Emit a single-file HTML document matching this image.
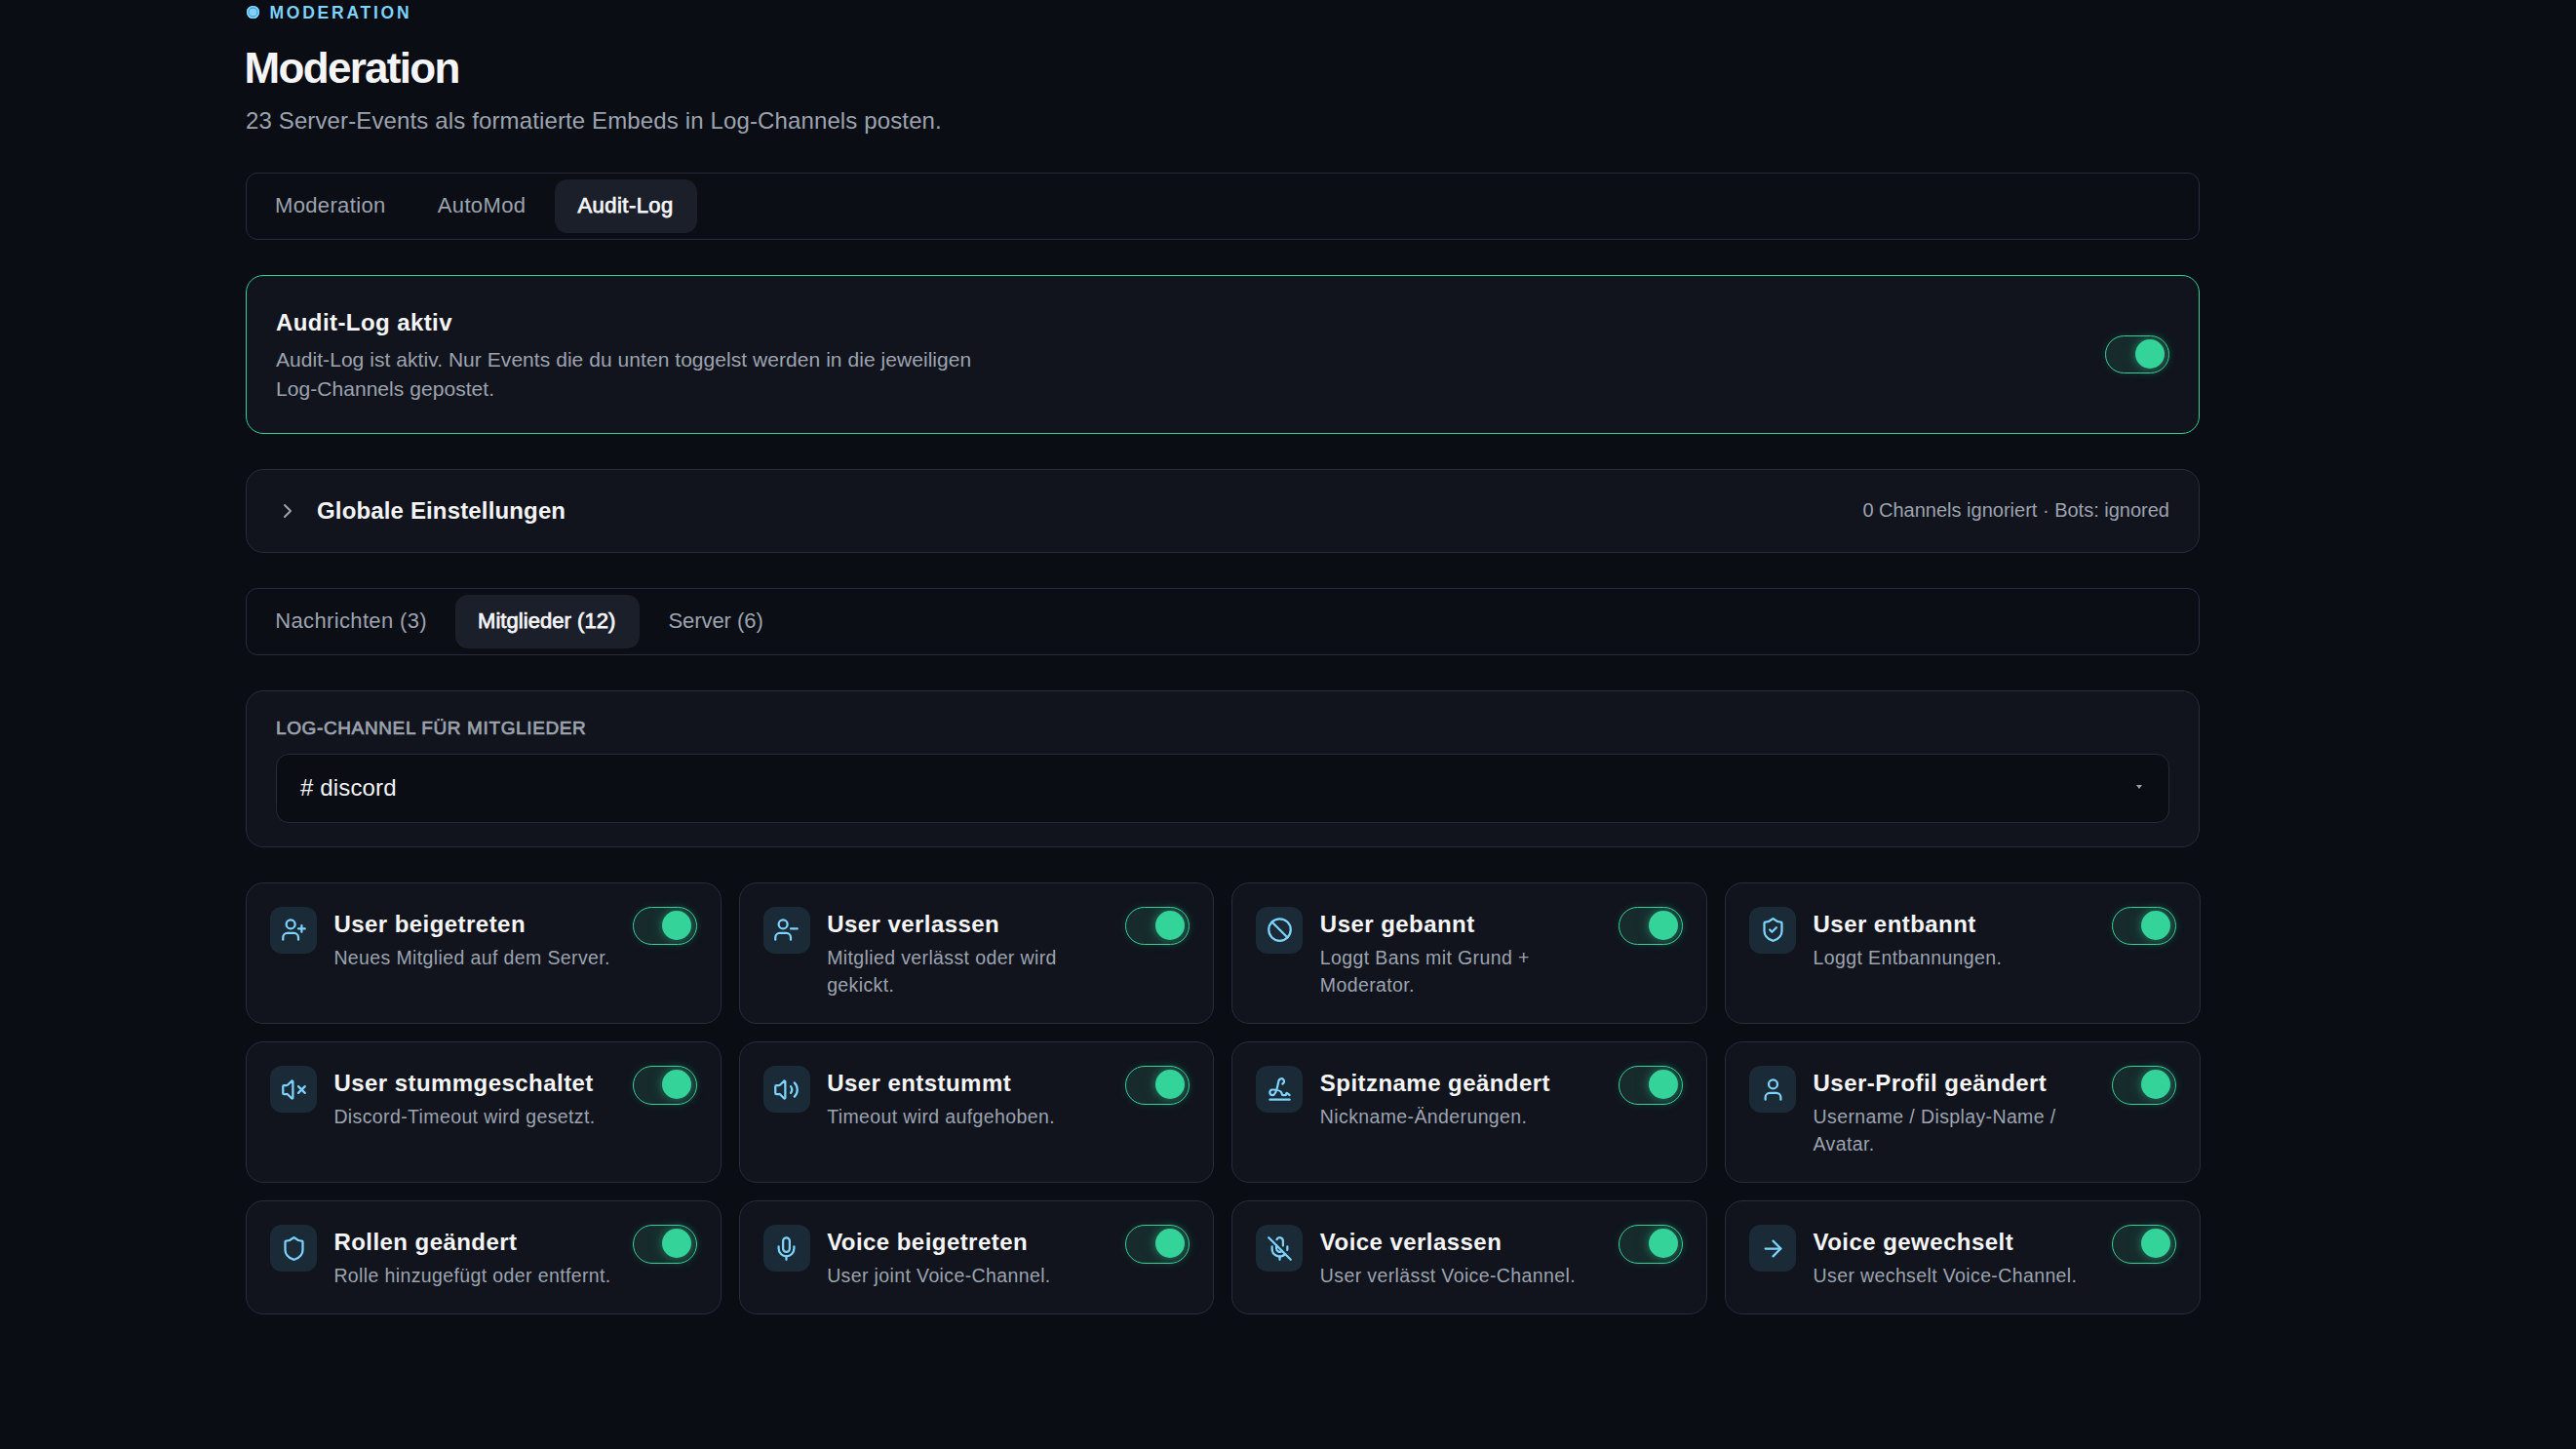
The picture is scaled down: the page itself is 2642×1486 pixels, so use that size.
<!DOCTYPE html>
<html lang="de"><head><meta charset="utf-8"><title>Moderation</title>
<style>
*{box-sizing:border-box;margin:0;padding:0}
html,body{width:2642px;height:1486px;overflow:hidden;background:#0a0d14}
body{position:relative;font-family:"Liberation Sans",sans-serif;}
.t{position:absolute;white-space:nowrap}
.dot{position:absolute;left:253px;top:6.3px;width:13px;height:12.8px;border-radius:50%;background:#7dd3fc;box-shadow:inset 0 0 0 1.6px #7ddcfc, inset 0 0 0 2.4px #3f7fd0}
.eyebrow{font-size:17.5px;line-height:24px;font-weight:700;letter-spacing:2.75px;color:#7dd3fc}
.h1{font-size:44px;line-height:52px;font-weight:700;letter-spacing:-1.7px;color:#f5f5f7}
.sub{font-size:24px;line-height:32px;color:#9ca3af;letter-spacing:0.13px}
.box{position:absolute;left:252px;width:2004px;border:1.5px solid #292d3a}
.gc{border-radius:12.5px}
.tabs{border-radius:12px;background:#0b0e15}
.act{position:absolute;border-radius:13px;background:#1b1f2a}
.tab{font-size:22px;line-height:30px;color:#9ca3af;letter-spacing:0.35px}
.tab.on{color:#f5f5f7;font-weight:400;font-size:22px;letter-spacing:0.05px;-webkit-text-stroke:0.75px #f5f5f7}
.card{border-radius:18px;background:#11141d}
.card.green{border-color:#34d399}
.ct{font-size:24px;line-height:32px;font-weight:700;color:#f5f5f7;letter-spacing:0.45px}
.cd{font-size:21px;line-height:29.7px;color:#9ca3af}
.gd{font-size:19.5px;line-height:28px;color:#9ca3af;letter-spacing:0.38px}
.ic{position:absolute;width:24px;height:24px;color:#7dd3fc}
.ic svg{display:block}
.chev{color:#9ca3af}
.ib{position:absolute;width:48px;height:48px;border-radius:12px;background:#1b2a37}
.ib .ic{left:10.5px;top:10.3px;width:27px;height:27px}
.lbl{font-size:19px;line-height:26px;font-weight:400;color:#9ca3af;letter-spacing:0.62px;-webkit-text-stroke:0.7px #9ca3af}
.sel{position:absolute;border:1.5px solid #262a37;border-radius:13px;background:#0a0d14}
.disc{font-size:24px;line-height:32px;color:#f5f5f7}
.tri{position:absolute;width:0;height:0;border-left:3.5px solid transparent;border-right:3.5px solid transparent;border-top:4.5px solid #9ca3af}
.tg{position:absolute;width:66px;height:39.3px;border-radius:20px;border:1.5px solid #34d399;background:#172a2c;box-shadow:0 0 10px rgba(52,211,153,.12)}
.kn{position:absolute;right:4.5px;top:2.6px;width:30px;height:30px;border-radius:50%;background:#34d399;box-shadow:0 0 8px rgba(52,211,153,.4),0 0 18px rgba(52,211,153,.18)}
</style>
<script>(function(){var w=window.innerWidth;if(w&&Math.abs(w-2642)>2){document.documentElement.style.zoom=(w/2642);}})();</script></head>
<body>
<div class="dot"></div>
<div class="t eyebrow" style="left:276.5px;top:1.24px">MODERATION</div>
<div class="t h1" style="left:250.6px;top:44.05px">Moderation</div>
<div class="t sub" style="left:252px;top:107.68px">23 Server-Events als formatierte Embeds in Log-Channels posten.</div>
<div class="box tabs" style="top:176.7px;height:69.5px"></div>
<div class="act" style="left:569.3px;top:184px;width:145.4px;height:54.6px"></div>
<div class="t tab" style="left:282px;top:195.78px">Moderation</div>
<div class="t tab" style="left:448.8px;top:195.78px">AutoMod</div>
<div class="t tab on" style="left:592.5px;top:195.78px;letter-spacing:0.45px">Audit-Log</div>
<div class="box card green" style="top:282px;height:163.4px"></div>
<div class="t ct" style="left:283px;top:315.08px;letter-spacing:0.42px">Audit-Log aktiv</div>
<div class="t cd" style="left:283px;top:354.37px;line-height:29.7px;font-size:21px;letter-spacing:0.05px">Audit-Log ist aktiv. Nur Events die du unten toggelst werden in die jeweiligen<br>Log-Channels gepostet.</div>
<div class="tg" style="left:2159px;top:344px"><div class="kn"></div></div>
<div class="box card" style="top:481px;height:85.5px"></div>
<div class="ic chev" style="left:282.5px;top:512px"><svg width="24" height="24" viewBox="0 0 24 24" fill="none" stroke="currentColor" stroke-width="2" stroke-linecap="round" stroke-linejoin="round"><path d="m9 18 6-6-6-6"/></svg></div>
<div class="t ct" style="left:325px;top:507.58px;letter-spacing:0.15px">Globale Einstellungen</div>
<div class="t cd" style="right:417px;top:508.97px;font-size:20px;line-height:28px">0 Channels ignoriert · Bots: ignored</div>
<div class="box tabs" style="top:603px;height:69.2px"></div>
<div class="act" style="left:467.2px;top:610px;width:188.6px;height:55px"></div>
<div class="t tab" style="left:282.3px;top:621.98px">Nachrichten (3)</div>
<div class="t tab on" style="left:490px;top:621.98px">Mitglieder (12)</div>
<div class="t tab" style="left:685.4px;top:621.98px;letter-spacing:-0.05px">Server (6)</div>
<div class="box card" style="top:708.3px;height:160.6px"></div>
<div class="t lbl" style="left:283px;top:733.82px">LOG-CHANNEL FÜR MITGLIEDER</div>
<div class="sel" style="left:283.3px;top:773.3px;width:1942px;height:70.5px"></div>
<div class="t disc" style="letter-spacing:0.15px;left:308px;top:791.98px">#&nbsp;discord</div>
<div class="tri" style="left:2191px;top:805px"></div>
<div class="box card gc" style="left:252.00px;top:904.7px;width:487.6px;height:145.5px"></div>
<div class="ib" style="left:277.00px;top:930.00px"><div class="ic"><svg width="27" height="27" viewBox="0 0 24 24" fill="none" stroke="currentColor" stroke-width="2" stroke-linecap="round" stroke-linejoin="round"><path d="M16 21v-2a4 4 0 0 0-4-4H6a4 4 0 0 0-4 4v2"/><circle cx="9" cy="7" r="4"/><line x1="19" x2="19" y1="8" y2="14"/><line x1="22" x2="16" y1="11" y2="11"/></svg></div></div>
<div class="t ct" style="left:342.40px;top:931.88px">User beigetreten</div>
<div class="t gd" style="left:342.40px;top:968.04px">Neues Mitglied auf dem Server.</div>
<div class="tg" style="left:648.7px;top:930.0px"><div class="kn"></div></div>
<div class="box card gc" style="left:757.73px;top:904.7px;width:487.6px;height:145.5px"></div>
<div class="ib" style="left:782.73px;top:930.00px"><div class="ic"><svg width="27" height="27" viewBox="0 0 24 24" fill="none" stroke="currentColor" stroke-width="2" stroke-linecap="round" stroke-linejoin="round"><path d="M16 21v-2a4 4 0 0 0-4-4H6a4 4 0 0 0-4 4v2"/><circle cx="9" cy="7" r="4"/><line x1="22" x2="16" y1="11" y2="11"/></svg></div></div>
<div class="t ct" style="left:848.13px;top:931.88px">User verlassen</div>
<div class="t gd" style="left:848.13px;top:968.04px">Mitglied verlässt oder wird<br>gekickt.</div>
<div class="tg" style="left:1154.43px;top:930.0px"><div class="kn"></div></div>
<div class="box card gc" style="left:1263.46px;top:904.7px;width:487.6px;height:145.5px"></div>
<div class="ib" style="left:1288.46px;top:930.00px"><div class="ic"><svg width="27" height="27" viewBox="0 0 24 24" fill="none" stroke="currentColor" stroke-width="2" stroke-linecap="round" stroke-linejoin="round"><circle cx="12" cy="12" r="10"/><path d="m4.9 4.9 14.2 14.2"/></svg></div></div>
<div class="t ct" style="left:1353.86px;top:931.88px">User gebannt</div>
<div class="t gd" style="left:1353.86px;top:968.04px">Loggt Bans mit Grund +<br>Moderator.</div>
<div class="tg" style="left:1660.16px;top:930.0px"><div class="kn"></div></div>
<div class="box card gc" style="left:1769.19px;top:904.7px;width:487.6px;height:145.5px"></div>
<div class="ib" style="left:1794.19px;top:930.00px"><div class="ic"><svg width="27" height="27" viewBox="0 0 24 24" fill="none" stroke="currentColor" stroke-width="2" stroke-linecap="round" stroke-linejoin="round"><path d="M20 13c0 5-3.5 7.5-7.66 8.95a1 1 0 0 1-.67-.01C7.5 20.5 4 18 4 13V6a1 1 0 0 1 1-1c2 0 4.5-1.2 6.24-2.72a1.17 1.17 0 0 1 1.52 0C14.51 3.81 17 5 19 5a1 1 0 0 1 1 1z"/><path d="m9 12 2 2 4-4"/></svg></div></div>
<div class="t ct" style="left:1859.59px;top:931.88px">User entbannt</div>
<div class="t gd" style="left:1859.59px;top:968.04px">Loggt Entbannungen.</div>
<div class="tg" style="left:2165.89px;top:930.0px"><div class="kn"></div></div>
<div class="box card gc" style="left:252.00px;top:1068.0px;width:487.6px;height:144.8px"></div>
<div class="ib" style="left:277.00px;top:1093.30px"><div class="ic"><svg width="27" height="27" viewBox="0 0 24 24" fill="none" stroke="currentColor" stroke-width="2" stroke-linecap="round" stroke-linejoin="round"><path d="M11 4.702a.705.705 0 0 0-1.203-.498L6.413 7.587A1.4 1.4 0 0 1 5.416 8H3a1 1 0 0 0-1 1v6a1 1 0 0 0 1 1h2.416a1.4 1.4 0 0 1 .997.413l3.383 3.384A.705.705 0 0 0 11 19.298z"/><line x1="22" x2="16" y1="9" y2="15"/><line x1="16" x2="22" y1="9" y2="15"/></svg></div></div>
<div class="t ct" style="left:342.40px;top:1095.18px">User stummgeschaltet</div>
<div class="t gd" style="left:342.40px;top:1131.34px">Discord-Timeout wird gesetzt.</div>
<div class="tg" style="left:648.7px;top:1093.3px"><div class="kn"></div></div>
<div class="box card gc" style="left:757.73px;top:1068.0px;width:487.6px;height:144.8px"></div>
<div class="ib" style="left:782.73px;top:1093.30px"><div class="ic"><svg width="27" height="27" viewBox="0 0 24 24" fill="none" stroke="currentColor" stroke-width="2" stroke-linecap="round" stroke-linejoin="round"><path d="M11 4.702a.705.705 0 0 0-1.203-.498L6.413 7.587A1.4 1.4 0 0 1 5.416 8H3a1 1 0 0 0-1 1v6a1 1 0 0 0 1 1h2.416a1.4 1.4 0 0 1 .997.413l3.383 3.384A.705.705 0 0 0 11 19.298z"/><path d="M16 9a5 5 0 0 1 0 6"/><path d="M19.364 18.364a9 9 0 0 0 0-12.728"/></svg></div></div>
<div class="t ct" style="left:848.13px;top:1095.18px">User entstummt</div>
<div class="t gd" style="left:848.13px;top:1131.34px">Timeout wird aufgehoben.</div>
<div class="tg" style="left:1154.43px;top:1093.3px"><div class="kn"></div></div>
<div class="box card gc" style="left:1263.46px;top:1068.0px;width:487.6px;height:144.8px"></div>
<div class="ib" style="left:1288.46px;top:1093.30px"><div class="ic"><svg width="27" height="27" viewBox="0 0 24 24" fill="none" stroke="currentColor" stroke-width="2" stroke-linecap="round" stroke-linejoin="round"><path d="m21 17-2.156-1.868A.5.5 0 0 0 18 15.5v.5a1 1 0 0 1-1 1h-2a1 1 0 0 1-1-1c0-2.545-3.991-3.97-8.5-4a1 1 0 0 0 0 5c4.153 0 4.745-11.295 5.708-13.5a2.5 2.5 0 1 1 3.31 3.284"/><path d="M3 21h18"/></svg></div></div>
<div class="t ct" style="left:1353.86px;top:1095.18px">Spitzname geändert</div>
<div class="t gd" style="left:1353.86px;top:1131.34px">Nickname-Änderungen.</div>
<div class="tg" style="left:1660.16px;top:1093.3px"><div class="kn"></div></div>
<div class="box card gc" style="left:1769.19px;top:1068.0px;width:487.6px;height:144.8px"></div>
<div class="ib" style="left:1794.19px;top:1093.30px"><div class="ic"><svg width="27" height="27" viewBox="0 0 24 24" fill="none" stroke="currentColor" stroke-width="2" stroke-linecap="round" stroke-linejoin="round"><path d="M19 21v-2a4 4 0 0 0-4-4H9a4 4 0 0 0-4 4v2"/><circle cx="12" cy="7" r="4"/></svg></div></div>
<div class="t ct" style="left:1859.59px;top:1095.18px">User-Profil geändert</div>
<div class="t gd" style="left:1859.59px;top:1131.34px">Username / Display-Name /<br>Avatar.</div>
<div class="tg" style="left:2165.89px;top:1093.3px"><div class="kn"></div></div>
<div class="box card gc" style="left:252.00px;top:1231.1px;width:487.6px;height:116.8px"></div>
<div class="ib" style="left:277.00px;top:1256.40px"><div class="ic"><svg width="27" height="27" viewBox="0 0 24 24" fill="none" stroke="currentColor" stroke-width="2" stroke-linecap="round" stroke-linejoin="round"><path d="M20 13c0 5-3.5 7.5-7.66 8.95a1 1 0 0 1-.67-.01C7.5 20.5 4 18 4 13V6a1 1 0 0 1 1-1c2 0 4.5-1.2 6.24-2.72a1.17 1.17 0 0 1 1.52 0C14.51 3.81 17 5 19 5a1 1 0 0 1 1 1z"/></svg></div></div>
<div class="t ct" style="left:342.40px;top:1258.28px">Rollen geändert</div>
<div class="t gd" style="left:342.40px;top:1294.44px">Rolle hinzugefügt oder entfernt.</div>
<div class="tg" style="left:648.7px;top:1256.4px"><div class="kn"></div></div>
<div class="box card gc" style="left:757.73px;top:1231.1px;width:487.6px;height:116.8px"></div>
<div class="ib" style="left:782.73px;top:1256.40px"><div class="ic"><svg width="27" height="27" viewBox="0 0 24 24" fill="none" stroke="currentColor" stroke-width="2" stroke-linecap="round" stroke-linejoin="round"><path d="M12 19v3"/><path d="M19 10v2a7 7 0 0 1-14 0v-2"/><rect x="9" y="2" width="6" height="13" rx="3"/></svg></div></div>
<div class="t ct" style="left:848.13px;top:1258.28px">Voice beigetreten</div>
<div class="t gd" style="left:848.13px;top:1294.44px">User joint Voice-Channel.</div>
<div class="tg" style="left:1154.43px;top:1256.4px"><div class="kn"></div></div>
<div class="box card gc" style="left:1263.46px;top:1231.1px;width:487.6px;height:116.8px"></div>
<div class="ib" style="left:1288.46px;top:1256.40px"><div class="ic"><svg width="27" height="27" viewBox="0 0 24 24" fill="none" stroke="currentColor" stroke-width="2" stroke-linecap="round" stroke-linejoin="round"><line x1="2" x2="22" y1="2" y2="22"/><path d="M18.89 13.23A7.12 7.12 0 0 0 19 12v-2"/><path d="M5 10v2a7 7 0 0 0 12 5"/><path d="M15 9.34V5a3 3 0 0 0-5.68-1.33"/><path d="M9 9v3a3 3 0 0 0 5.12 2.12"/><line x1="12" x2="12" y1="19" y2="22"/></svg></div></div>
<div class="t ct" style="left:1353.86px;top:1258.28px">Voice verlassen</div>
<div class="t gd" style="left:1353.86px;top:1294.44px">User verlässt Voice-Channel.</div>
<div class="tg" style="left:1660.16px;top:1256.4px"><div class="kn"></div></div>
<div class="box card gc" style="left:1769.19px;top:1231.1px;width:487.6px;height:116.8px"></div>
<div class="ib" style="left:1794.19px;top:1256.40px"><div class="ic"><svg width="27" height="27" viewBox="0 0 24 24" fill="none" stroke="currentColor" stroke-width="2" stroke-linecap="round" stroke-linejoin="round"><path d="M5 12h14"/><path d="m12 5 7 7-7 7"/></svg></div></div>
<div class="t ct" style="left:1859.59px;top:1258.28px">Voice gewechselt</div>
<div class="t gd" style="left:1859.59px;top:1294.44px">User wechselt Voice-Channel.</div>
<div class="tg" style="left:2165.89px;top:1256.4px"><div class="kn"></div></div>
</body></html>
